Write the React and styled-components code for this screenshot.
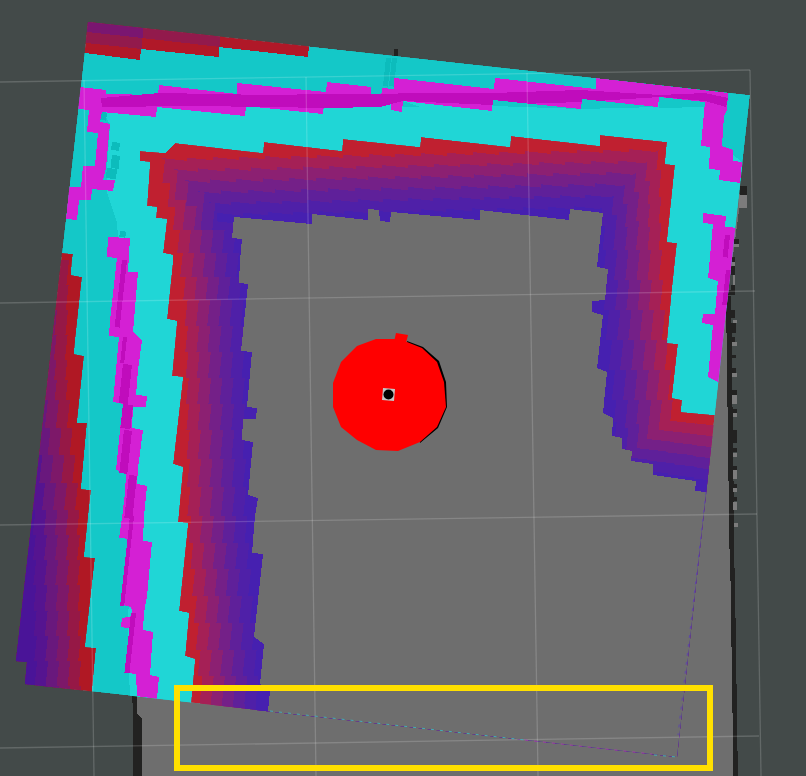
import React from 'react';
import styled, { createGlobalStyle } from 'styled-components';

const GlobalStyle = createGlobalStyle`
  html, body {
    margin: 0;
    padding: 0;
    background: #434a49;
  }
`;

const Viewport = styled.div`
  position: relative;
  width: 806px;
  height: 776px;
  overflow: hidden;
  background: #434a49;
`;

const MapCanvas = styled.svg`
  display: block;
  width: 806px;
  height: 776px;
`;

// the yellow selection box sits on top of the map
const SelectionBox = styled.div`
  position: absolute;
  left: 174px;
  top: 685px;
  width: 527px;
  height: 74px;
  border: 6px solid #ffe000;
`;

const Cell = styled.polygon`
  fill: ${(p) => p.$fill};
  shape-rendering: crispEdges;
`;

const GridLine = styled.line`
  stroke: rgba(255, 255, 255, 0.17);
  stroke-width: 1.3;
`;

const Dots = styled.polyline`
  fill: none;
  stroke: ${(p) => p.$color};
  stroke-width: 1;
  stroke-dasharray: 3 6;
`;

const GRAY = '#6e6e6e';
const WALL = '#222221';
const BLOTCH = '#7c7c7c';
const CYAN_DARK = '#14c8c8';
const CYAN_LIGHT = '#20d6d6';
const MAGENTA = '#d420d4';
const MAGENTA_DARK = '#c00cbc';

const TILE = '88,22 750,95 677,757 25,684 27,662 16,661';

const BASE_MAP =
  '137,690 137,714 142,718 142,776 736,776 732,516 727,300 741,196 700,150 137,500';

const WALL_BOTTOM =
  '729,516 734,516 735,618 736,618 736,684 737,684 737,751 738,751 738,776 733,776 733,713 732,713 732,647 731,647 731,581 730,581';

const WALL_LEFT = '132,690 137,690 137,714 142,718 142,776 133,776 133,715';

const WALL_STRIP = '726,296 731,296 734,516 729,516';

const WALL_DARK = [
  [394, 49, 398, 56], [740, 186, 747, 195], [734, 239, 739, 244], [731, 257, 735, 262],
  [731, 266, 735, 275], [731, 285, 735, 290], [728, 290, 735, 295], [727, 310, 735, 318],
  [727, 323, 736, 333], [727, 337, 735, 342], [727, 355, 736, 358], [728, 368, 736, 373],
  [728, 390, 737, 395], [728, 409, 737, 413], [728, 430, 737, 443], [729, 448, 737, 452],
  [729, 466, 737, 470], [729, 484, 737, 488], [729, 497, 737, 501],
];

const WALL_BLOTCH = [
  [739, 195, 747, 208], [733, 244, 739, 247], [732, 262, 735, 266], [733, 275, 735, 285],
  [733, 320, 737, 323], [732, 342, 737, 346], [732, 373, 737, 377], [732, 395, 737, 404],
  [733, 413, 737, 417], [733, 453, 737, 457], [733, 470, 737, 479], [733, 488, 737, 492],
  [733, 502, 737, 510], [734, 523, 738, 527],
];

// outer costmap rows along the top edge
const TOP_RED = '85,53 140,60 141,49 219,57 219,47 308,57 309,46 309,30 85,10';
const TOP_MAROON = '86,43 142,49 142,38 220,47 220,36 232,37 232,20 80,10';
const TOP_PURPLE = '87,32 143,38 143,20 80,10';

// outer costmap columns along the left edge, far side runs off the tile
const LEFT_BAND =
  '62,253 73,254 72,260 71,275 82,277 75,342 74,354 84,356 77,423 87,423 81,489 91,490 88,518 84,557 95,558 85,647 96,648 92,691 88,1000 -300,1000 -300,253';
const LEFT_TONES = ['#b01824', '#961846', '#7d1869', '#69187d', '#551490', '#4a1498'];

const LIGHT_AREA =
  '100,108 403,95 715,97 710,146 728,150 745,165 745,185 800,300 800,800 160,720 130,700 128,640 130,516 124,404 122,300 118,238 117,222 107,192 107,170 110,124';

const RING_TOP =
  '80,87 106,90 106,94 158,95 159,85 237,94 237,83 326,92 327,82 371,87 371,97 381,98 382,88 394,89 394,78 494,89 495,78 596,89 596,78 728,93 727,110 724,116 722,146 733,150 733,161 742,162 740,183 719,180 720,170 709,169 710,147 701,146 705,102 659,97 658,107 582,99 581,109 493,100 492,111 403,101 402,112 391,110 391,100 381,99 380,107 324,104 323,114 246,106 245,116 157,107 156,117 102,112 100,122 110,124 106,168 103,180 115,180 113,191 92,189 91,200 79,200 77,220 66,219 69,187 81,187 83,166 95,166 98,133 87,132 89,110 78,109';

const RING_LEFT =
  '108,237 130,238 128,272 138,272 133,332 142,340 138,370 136,395 147,396 146,407 133,407 132,428 143,430 138,468 137,484 147,486 144,516 143,541 152,542 147,596 144,613 143,630 153,632 150,675 159,677 157,699 137,696 136,674 127,673 132,629 121,627 122,618 133,616 131,607 123,605 126,576 130,539 119,538 122,518 125,493 126,473 116,470 121,420 124,404 113,402 119,337 109,336 110,320 117,258 107,257';

const RING_RIGHT =
  '703,213 726,216 725,227 740,228 722,382 718,382 708,377 713,325 702,323 703,314 715,314 717,290 718,281 708,278 713,224 703,223';

const RING_CORE =
  '101,98 160,93 267,95 327,94 393,94 403,93 493,93 580,90 660,95 705,93 728,98 726,107 705,101 660,97 581,102 492,105 403,101 380,107 325,108 270,107 190,106 102,107';

const DARK_STRIPS = [
  '582,99 658,107 581,109',
  '659,97 705,102 705,107 659,108',
  '493,100 581,109 493,106',
  '403,101 420,107 403,107',
];

// [x, y, w, h] in screen pixels, leaned with the tile
const CYAN_PATCHES = [
  [112, 142, 8, 8], [112, 155, 8, 13], [107, 168, 10, 10], [101, 112, 6, 8],
  [120, 231, 6, 6], [386, 58, 5, 28], [392, 58, 5, 28],
];

const CORE_SLABS = [
  [122, 260, 5, 67], [123, 337, 4, 26], [123, 364, 9, 39], [123, 404, 10, 24],
  [124, 430, 8, 43], [129, 475, 8, 43], [130, 516, 4, 90], [131, 613, 5, 60],
  [725, 235, 5, 22], [726, 270, 5, 35],
];

const INNER_CONTOUR =
  '140,151 165,153 175,143 263,153 264,142 342,151 343,139 420,147 421,137 510,147 511,136 600,146 600,135 667,142 665,164 675,165 667,242 677,243 672,290 667,343 678,344 672,398 682,400 681,412 714,415 1000,450 1000,1000 150,1000 191,703 195,659 185,656 189,613 179,611 188,523 178,522 183,467 173,464 183,377 172,376 177,321 167,319 173,260 173,255 163,253 167,219 156,218 157,207 147,206 150,162 140,161';
const INNER_TONES = ['#c02030', '#a52056', '#8c2072', '#742088', '#5f209a', '#4f20a8', '#4620b0'];

const FREE_SPACE =
  '234,217 312,224 312,214 368,220 368,209 379,210 380,221 390,222 391,212 480,220 480,210 569,220 570,209 603,213 597,267 608,269 605,300 592,301 592,312 603,315 597,368 607,372 603,413 613,418 612,436 622,438 622,449 632,451 631,461 653,464 653,475 696,481 695,491 706,492 800,500 800,800 268,800 268,711 270,691 260,684 264,644 254,637 263,554 252,553 255,516 258,498 248,495 253,442 242,440 243,419 256,419 257,408 247,407 252,352 241,351 248,284 239,283 240,260 242,239 232,238';

const ROBOT =
  '333,383 341,362 357,346 376,339 395,339 407,342 422,348 437,362 444,382 446,407 437,427 420,442 398,451 376,450 357,440 341,427 333,407';
const ROBOT_NOTCH = '396,333 408,335 406,343 394,342';
const ROBOT_SHADOW = '407,341 423,347 439,361 446,382 447,407 438,428 420,443 415,400';

const LINES = [
  [0, 82, 750, 70], [0, 303, 755, 291], [0, 525, 757, 514], [0, 748, 759, 736],
  [84, 80, 94, 776], [306, 77, 316, 776], [527, 73, 538, 776], [750, 70, 761, 776],
];

const rectPoints = ([x1, y1, x2, y2]) => `${x1},${y1} ${x2},${y1} ${x2},${y2} ${x1},${y2}`;

const LEAN = 0.11;

const slabPoints = ([x, y, w, h]) =>
  [
    `${x},${y}`,
    `${x + w},${y + w * LEAN}`,
    `${x + w - h * LEAN},${y + w * LEAN + h}`,
    `${x - h * LEAN},${y + h}`,
  ].join(' ');

// a straight edge drawn the way the rotated grid draws it: short leaning runs with small jogs
const stairEdge = ([ax, ay], [bx, by]) => {
  const dx = bx - ax;
  const dy = by - ay;
  const upright = Math.abs(dy) > Math.abs(dx);
  const n = Math.max(1, Math.round(Math.abs(upright ? dy : dx) / 26));
  const out = [];
  for (let i = 0; i < n; i++) {
    const sx = ax + (dx * i) / n;
    const sy = ay + (dy * i) / n;
    const ex = ax + (dx * (i + 1)) / n;
    const ey = ay + (dy * (i + 1)) / n;
    if (upright) {
      const tilt = ((ey - sy) * LEAN) / 2;
      out.push([(sx + ex) / 2 + tilt, sy], [(sx + ex) / 2 - tilt, ey]);
    } else {
      const tilt = ((ex - sx) * LEAN) / 2;
      out.push([sx, (sy + ey) / 2 - tilt], [ex, (sy + ey) / 2 + tilt]);
    }
  }
  return out;
};

const stairPath = (corners) => {
  const pts = [];
  for (let i = 0; i < corners.length - 1; i++) {
    pts.push(...stairEdge(corners[i], corners[i + 1]));
  }
  return pts;
};

const toPoints = (pts) => pts.map(([x, y]) => `${x.toFixed(1)},${y.toFixed(1)}`).join(' ');

// k-th boundary of the inner gradient, counted from the red edge
const innerBoundary = (k) => {
  const d = 11.2 * k;
  const topY = (x) => 157 + 11.2 * k - 0.019 * (x - 300);
  const cornerTL = [161 + d, topY(161 + d)];
  const cornerTR = [655 - d, topY(655 - d)];
  const right = [
    [660 - d, 170 + d],
    [660 - d, 250],
    [662 - d, 310],
    [671 - d, 400],
  ].filter(([, y], i) => i === 0 || y > 170 + d + 10);
  const cornerBR = [672 - d, 421 + d * 0.8];
  const endBR = [720, 426 + d];
  const left = [
    [202 + d, 703],
    [189 + d, 516],
    [188 + d, 430],
    [186 + d, 300],
    [177 + d, 230],
  ];
  const path = stairPath([cornerTL, cornerTR, ...right, cornerBR, endBR]);
  const back = stairPath([...left, cornerTL]);
  return toPoints([...path, [1000, 440 + d], [1000, 1000], [224 + d, 1000], ...back]);
};

// k-th boundary of the left gradient, the inside of it lies towards the tile edge
const leftBoundary = (k) => {
  const d = 11 * k;
  const line = [
    [68 - d, 260],
    [66 - d, 360],
    [67 - d, 400],
    [78 - d, 510],
    [80 - d, 686],
    [80 - d, 1000],
  ];
  return toPoints([...stairPath(line), [-300, 1000], [-300, 260]]);
};

const GradedBands = ({ id, outline, tones, boundary }) => (
  <g clipPath={`url(#${id})`}>
    <clipPath id={id}>
      <polygon points={outline} />
    </clipPath>
    <Cell points={outline} $fill={tones[0]} />
    {tones.slice(1).map((tone, i) => (
      <Cell key={tone} points={boundary(i)} $fill={tone} />
    ))}
  </g>
);

const App = () => {
  return (
    <Viewport>
      <GlobalStyle />
      <MapCanvas viewBox="0 0 806 776">
        <Cell points={BASE_MAP} $fill={GRAY} />
        <Cell points={WALL_LEFT} $fill={WALL} />
        <Cell points={WALL_STRIP} $fill={WALL} />
        <Cell points={WALL_BOTTOM} $fill={WALL} />
        {WALL_DARK.map((r) => (
          <Cell key={r.join()} points={rectPoints(r)} $fill={WALL} />
        ))}
        {WALL_BLOTCH.map((r) => (
          <Cell key={r.join()} points={rectPoints(r)} $fill={BLOTCH} />
        ))}

        <clipPath id="tile">
          <polygon points={TILE} />
        </clipPath>
        <g clipPath="url(#tile)">
          <Cell points={TILE} $fill={CYAN_DARK} />
          <Cell points={TOP_RED} $fill="#b01828" />
          <Cell points={TOP_MAROON} $fill="#921a4c" />
          <Cell points={TOP_PURPLE} $fill="#7a1670" />
          <GradedBands id="left-band" outline={LEFT_BAND} tones={LEFT_TONES} boundary={leftBoundary} />
          <Cell points={LIGHT_AREA} $fill={CYAN_LIGHT} />
          {CYAN_PATCHES.map((s) => (
            <Cell key={s.join()} points={slabPoints(s)} $fill="#0cbcbc" />
          ))}
          <Cell points={RING_TOP} $fill={MAGENTA} />
          <Cell points={RING_LEFT} $fill={MAGENTA} />
          <Cell points={RING_RIGHT} $fill={MAGENTA} />
          <Cell points={RING_CORE} $fill={MAGENTA_DARK} />
          {CORE_SLABS.map((s) => (
            <Cell key={s.join()} points={slabPoints(s)} $fill={MAGENTA_DARK} />
          ))}
          {DARK_STRIPS.map((p) => (
            <Cell key={p} points={p} $fill={CYAN_DARK} />
          ))}
          <GradedBands id="inner-band" outline={INNER_CONTOUR} tones={INNER_TONES} boundary={innerBoundary} />
          <Cell points={FREE_SPACE} $fill={GRAY} />
        </g>

        {LINES.map(([x1, y1, x2, y2]) => (
          <GridLine key={`${x1}-${y1}`} x1={x1} y1={y1} x2={x2} y2={y2} />
        ))}

        <Dots points="270,711 525,740" $color="#45b0b0" />
        <Dots points="525,740 652,754" $color="#a040a8" />
        <Dots points="654,755 677,757" $color="#45b0b0" />
        <Dots points="706,492 678,735" $color="#5d48a8" />

        <polygon points={ROBOT_SHADOW} fill="#000000" />
        <polygon points={ROBOT_NOTCH} fill="#ff0000" />
        <polygon points={ROBOT} fill="#ff0000" />
        <polygon points="383,388 395,389 394,401 382,400" fill="#c4c4c4" />
        <circle cx="388.5" cy="394.5" r="5" fill="#000000" />
      </MapCanvas>
      <SelectionBox />
    </Viewport>
  );
};

export default App;
